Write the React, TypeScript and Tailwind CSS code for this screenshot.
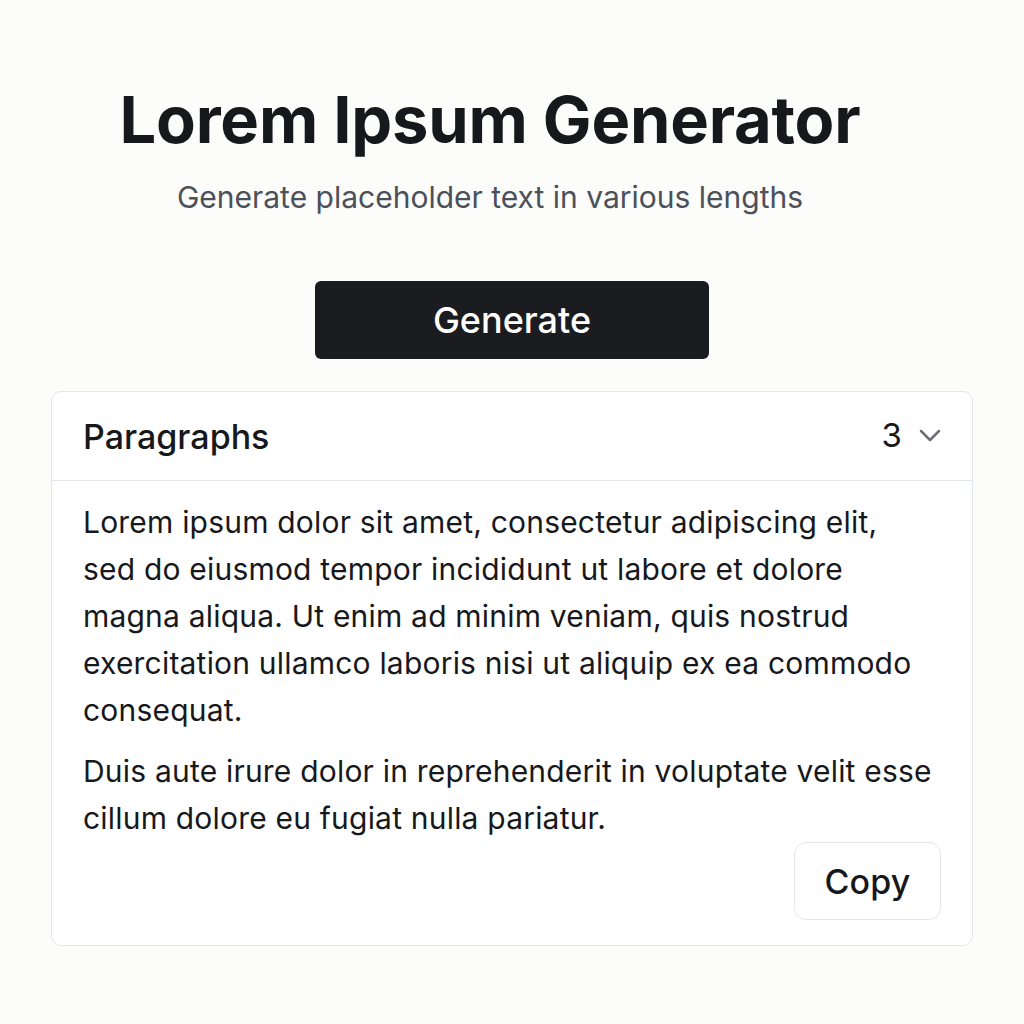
import React from "react";

export default function App() {
  return (
    <div className="min-h-[1024px] w-[1024px] bg-[#fcfcfb] flex flex-col items-center" style={{ fontFamily: "Inter, 'Noto Sans', sans-serif" }}>
      <h1 className="mt-[80px] mr-[44px] text-[65px] leading-[80px] font-bold tracking-[-0.2px] text-[#17181b]">Lorem Ipsum Generator</h1>
      <p className="mt-[19px] mr-[44px] text-[30px] leading-[36px] text-[#4b5059]">Generate placeholder text in various lengths</p>
      <button className="mt-[66px] w-[394px] h-[78px] rounded-[6px] bg-[#1a1c20] text-white text-[36px] font-medium">Generate</button>
      <div className="mt-[32px] w-[922px] bg-white border border-[#e3e6ec] rounded-[10px]">
        <div className="h-[89px] flex items-center justify-between px-[31px] border-b border-[#e3e6ec]">
          <span className="text-[34px] font-medium text-[#17181b]">Paragraphs</span>
          <div className="flex items-center gap-[17px]">
            <span className="text-[33px] text-[#17181b]">3</span>
            <svg width="22" height="14" viewBox="0 0 22 14" fill="none" stroke="#6b6e75" strokeWidth="2.5" strokeLinecap="round" strokeLinejoin="round"><path d="M2 2l9 9 9-9" /></svg>
          </div>
        </div>
        <div className="px-[31px] pt-[18px] pb-[25px] text-[30px] leading-[47px] tracking-[0.2px] text-[#17181b]">
          <p className="w-[852px]">Lorem ipsum dolor sit amet, consectetur adipiscing elit, sed do eiusmod tempor incididunt ut labore et dolore magna aliqua. Ut enim ad minim veniam, quis nostrud exercitation ullamco laboris nisi ut aliquip ex ea commodo consequat.</p>
          <p className="w-[852px] mt-[14px]">Duis aute irure dolor in reprehenderit in voluptate velit esse cillum dolore eu fugiat nulla pariatur.</p>
          <div className="flex justify-end">
            <button className="w-[147px] h-[78px] rounded-[12px] border border-[#e3e6ec] bg-white text-[34px] font-medium text-[#17181b]">Copy</button>
          </div>
        </div>
      </div>
    </div>
  );
}
